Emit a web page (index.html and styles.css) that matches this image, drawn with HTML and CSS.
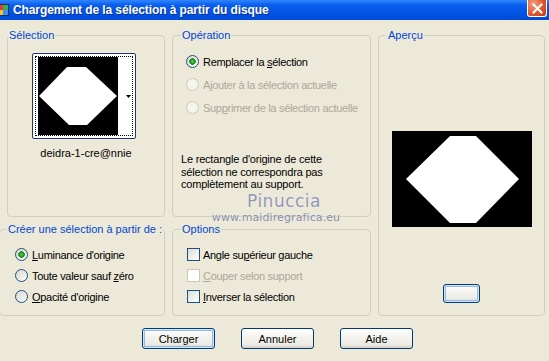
FILE: index.html
```html
<!DOCTYPE html>
<html lang="fr">
<head>
    <meta charset="UTF-8">
    <title>Chargement de la sélection à partir du disque</title>
    <link rel="stylesheet" href="styles.css">
</head>
<body>
    <div class="titlebar">
        <svg class="app-icon" width="12" height="14" viewBox="0 0 12 14">
            <rect x="0" y="1" width="11" height="12" fill="#1d2a6b"/>
            <rect x="1" y="2" width="4" height="5" fill="#e03c2c"/>
            <rect x="5" y="2" width="5" height="5" fill="#36b24a"/>
            <rect x="1" y="7" width="4" height="5" fill="#f3c531"/>
            <rect x="5" y="7" width="5" height="5" fill="#3c8ff0"/>
        </svg>
        <span class="title">Chargement de la sélection à partir du disque</span>
        <button class="close" type="button" aria-label="Fermer">
            <svg width="11" height="11" viewBox="0 0 11 11">
                <path d="M1.5 1.5 L9.5 9.5 M9.5 1.5 L1.5 9.5" stroke="#fff" stroke-width="2" stroke-linecap="square"/>
            </svg>
        </button>
    </div>

    <div class="panels">
        <!-- Sélection -->
        <fieldset class="group group-sel">
            <legend>Sélection</legend>
            <div class="sel-body">
                <div class="thumb">
                    <div class="thumb-focus">
                        <svg width="80" height="78" viewBox="0 0 80 78">
                            <rect width="80" height="78" fill="#000"/>
                            <polygon points="29,10 48,10 79,39 49,68 31,68 1,39" fill="#fff"/>
                        </svg>
                        <div class="thumb-drop">
                            <svg width="5" height="3" viewBox="0 0 5 3"><polygon points="0,0 5,0 2.5,3" fill="#000"/></svg>
                        </div>
                    </div>
                </div>
                <div class="thumb-name">deidra-1-cre@nnie</div>
            </div>
        </fieldset>

        <!-- Opération -->
        <fieldset class="group group-op">
            <legend>Opération</legend>
            <div class="op-body">
                <div class="choices">
                    <label class="choice"><input type="radio" name="op" checked><span>Remplacer la <u>s</u>élection</span></label>
                    <label class="choice disabled"><input type="radio" name="op" disabled><span>Ajouter à la sélection actuelle</span></label>
                    <label class="choice disabled"><input type="radio" name="op" disabled><span>Sup<u>p</u>rimer de la sélection actuelle</span></label>
                </div>
                <p class="note">Le rectangle d'origine de cette<br>sélection ne correspondra pas<br>complètement au support.</p>
            </div>
        </fieldset>

        <!-- Aperçu -->
        <fieldset class="group group-preview">
            <legend>Aperçu</legend>
            <div class="preview-body">
                <svg class="preview-img" width="140" height="96" viewBox="0 0 140 96">
                    <rect width="140" height="96" fill="#000"/>
                    <polygon points="58,5 84,5 127,48 84,92 58,92 14,48" fill="#fff"/>
                </svg>
                <button class="btn btn-small" type="button"></button>
            </div>
        </fieldset>

        <!-- Créer une sélection -->
        <fieldset class="group group-source">
            <legend>Créer une sélection à partir de :</legend>
            <div class="choices list-body">
                <label class="choice"><input type="radio" name="src" checked><span><u>L</u>uminance d'origine</span></label>
                <label class="choice"><input type="radio" name="src"><span>Toute valeur sauf <u>z</u>éro</span></label>
                <label class="choice"><input type="radio" name="src"><span><u>O</u>pacité d'origine</span></label>
            </div>
        </fieldset>

        <!-- Options -->
        <fieldset class="group group-options">
            <legend>Options</legend>
            <div class="choices list-body">
                <label class="choice check"><input type="checkbox"><span>Angle su<u>p</u>érieur gauche</span></label>
                <label class="choice check disabled"><input type="checkbox" disabled><span><u>C</u>ouper selon support</span></label>
                <label class="choice check"><input type="checkbox"><span><u>I</u>nverser la sélection</span></label>
            </div>
        </fieldset>
    </div>

    <div class="actions">
        <button class="btn btn-default" type="button">Charger</button>
        <button class="btn" type="button">Annuler</button>
        <button class="btn" type="button">Aide</button>
    </div>

    <div class="watermark">
        <span class="wm-name">Pinuccia</span>
        <span class="wm-site">www.maidiregrafica.eu</span>
    </div>
</body>
</html>
```

FILE: styles.css
```css
body {
    margin: 0;
    width: 549px;
    height: 361px;
    overflow: hidden;
    position: relative;
    background: #ece9d8;
    font-family: "Liberation Sans", Arial, sans-serif;
    font-size: 11px;
    color: #000;
}

/* Title bar */
.titlebar {
    height: 20px;
    display: flex;
    align-items: center;
    background: linear-gradient(#2f86fb, #0a5eee 25%, #0055e6 60%, #004bd6);
    color: #fff;
}

.app-icon {
    margin-left: -2px;
}

.title {
    margin-left: 3px;
    font-size: 12px;
    font-weight: bold;
    letter-spacing: -0.1px;
    text-shadow: 1px 1px 0 #0b2f96;
}

.close {
    align-self: flex-start;
    margin-left: auto;
    margin-right: 2px;
    width: 20px;
    height: 17px;
    padding: 0;
    display: flex;
    align-items: center;
    justify-content: center;
    border: 1px solid #fff;
    border-top: 0;
    border-radius: 0 0 3px 3px;
    background: radial-gradient(circle at 30% 25%, #f4a283, #e2572a 55%, #c33b12);
}

/* Group boxes */
.panels {
    display: grid;
    grid-template-columns: 158px 199px 167px;
    grid-template-rows: 188px 93px;
    column-gap: 7px;
    row-gap: 6px;
    padding: 9px 0 0 7px;
}

.group {
    margin: 0;
    padding: 0;
    min-width: 0;
    border: 1px solid #d0d0bf;
    border-radius: 4px;
}

.group legend {
    margin-left: 8px;
    padding: 0 1px;
    line-height: 13px;
    color: #0046d5;
}

.group-sel legend {
    margin-left: 0;
}

.group-preview {
    grid-column: 3;
    grid-row: 1 / 3;
}

.group-source {
    margin-left: -8px;
}

.group-source legend {
    margin-left: 7px;
}

/* Sélection */
.sel-body {
    display: flex;
    flex-direction: column;
    align-items: center;
    padding-top: 11px;
}

.thumb {
    margin-right: 4px;
    padding: 2px;
    border: 1px solid #1c3a6e;
    border-radius: 2px;
    background: #fff;
}

.thumb-focus {
    display: flex;
    padding: 0 0 0 2px;
    border: 1px dotted #000;
}

.thumb-focus svg {
    display: block;
}

.thumb-drop {
    width: 13px;
    display: flex;
    align-items: center;
    justify-content: flex-end;
    padding-right: 1px;
    background: #fff;
}

.thumb-name {
    margin-top: 8px;
    line-height: 13px;
}

/* Radio / check lists */
.choices {
    display: flex;
    flex-direction: column;
}

.choice {
    display: flex;
    align-items: center;
    gap: 4px;
    height: 13px;
    white-space: nowrap;
    letter-spacing: -0.3px;
}

.choice u {
    text-decoration-thickness: 1px;
    text-underline-offset: 1px;
}

.choice.disabled {
    color: #aca899;
}

.choice input {
    appearance: none;
    margin: 0;
    width: 13px;
    height: 13px;
    flex: none;
    border: 1px solid #1c5180;
    border-radius: 50%;
    background: linear-gradient(135deg, #d8d5cb, #fff);
}

.choice input:checked {
    background: radial-gradient(circle, #5fd35a 0, #21a121 2px, #1a8a1a 3px, transparent 3.5px),
                linear-gradient(135deg, #d8d5cb, #fff);
}

.choice input:disabled {
    border-color: #cac8bb;
    background: #f4f3ee;
}

.choice.check {
    gap: 3px;
}

.choice.check input {
    border-radius: 0;
    background: linear-gradient(135deg, #dcdcd7, #fff);
}

.choice.check input:disabled {
    background: #fff;
}

/* Opération */
.op-body {
    padding: 13px 0 0 8px;
}

.op-body .choices {
    margin-left: 5px;
    gap: 10px;
}

.note {
    margin: 39px 0 0;
    line-height: 12.5px;
    letter-spacing: -0.2px;
}

/* Créer / Options */
.list-body {
    gap: 8px;
    padding-top: 12px;
}

.group-source .list-body {
    padding-left: 15px;
}

.group-options .list-body {
    padding-left: 14px;
}

/* Aperçu */
.preview-body {
    display: flex;
    flex-direction: column;
    align-items: center;
    padding-top: 89px;
}

.preview-img {
    display: block;
}

/* Buttons */
.btn {
    width: 73px;
    height: 21px;
    padding: 0;
    border: 1px solid #003c74;
    border-radius: 3px;
    background: linear-gradient(#fff, #f4f3ee 40%, #ecebe6 80%, #d6d0c5);
    font-family: inherit;
    font-size: 11px;
    color: #000;
}

.btn-default {
    box-shadow: inset 0 0 0 1px #cee7ff, inset 0 0 0 2px #98b8ea;
}

.btn-small {
    width: 37px;
    height: 19px;
    margin-top: 57px;
    box-shadow: inset 0 0 0 1px #cee7ff, inset 0 0 0 2px #98b8ea;
}

.actions {
    display: flex;
    gap: 26px;
    margin-top: 12px;
    padding-left: 142px;
}

/* Watermark over the dialog */
.watermark {
    position: absolute;
    left: 215px;
    top: 191px;
    width: 122px;
    display: flex;
    flex-direction: column;
    align-items: center;
    pointer-events: none;
}

.wm-name {
    margin-left: 16px;
    font-family: "DejaVu Sans", sans-serif;
    font-size: 17px;
    line-height: 20px;
    letter-spacing: 0.5px;
    color: #9296b6;
    text-shadow: 0 0 1px #fff;
}

.wm-site {
    font-family: "DejaVu Sans", sans-serif;
    font-size: 11px;
    line-height: 13px;
    letter-spacing: 0.1px;
    color: #868aa8;
    text-shadow: 0 0 1px #fff;
}
```
